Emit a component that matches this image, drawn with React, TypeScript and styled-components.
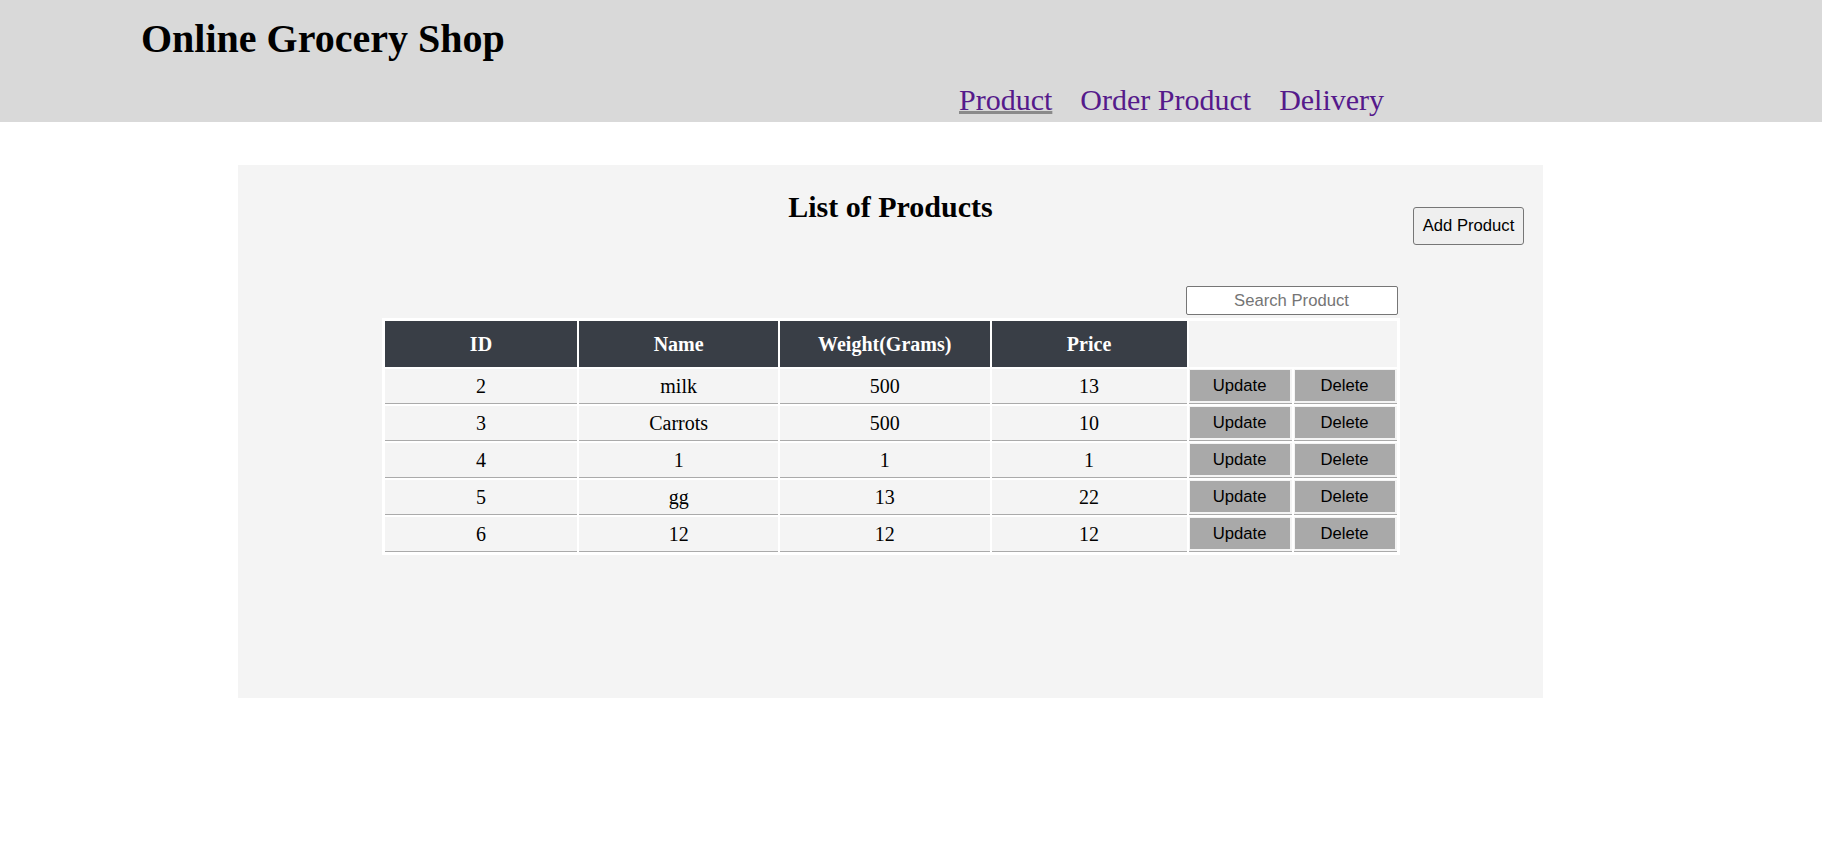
import React from "react";
import styled, { createGlobalStyle } from "styled-components";

const GlobalStyle = createGlobalStyle`
  html, body {
    margin: 0;
    padding: 0;
    background: #ffffff;
    font-family: "Liberation Serif", "Times New Roman", serif;
    color: #000;
  }
  * { box-sizing: border-box; }
`;

const Header = styled.header`
  height: 122px;
  background: #d9d9d9;
  padding: 16px 0 0 141px;
  display: flex;
  flex-direction: column;
`;

const Title = styled.h1`
  margin: 0;
  font-size: 40px;
  line-height: 46px;
  font-weight: bold;
`;

const Nav = styled.nav`
  display: flex;
  gap: 28px;
  margin: 21px 0 0 818px;
  font-size: 30px;
  line-height: 34px;
`;

const NavLink = styled.a<{ $active?: boolean }>`
  color: #551a8b;
  text-decoration: ${(p) => (p.$active ? "underline" : "none")};
  text-decoration-color: #8a8a8a;
  text-decoration-thickness: 3px;
  text-underline-offset: 1px;
`;

const Panel = styled.main`
  width: 1305px;
  height: 533px;
  margin: 43px 0 0 238px;
  background: #f4f4f4;
  display: flex;
  flex-direction: column;
`;

const PanelTop = styled.div`
  display: grid;
  grid-template-columns: 1fr auto 1fr;
  align-items: start;
  padding-top: 25px;
`;

const Heading = styled.h2`
  grid-column: 2;
  margin: 0;
  font-size: 30px;
  line-height: 34px;
  font-weight: bold;
  text-align: center;
`;

const AddButton = styled.button`
  grid-column: 3;
  justify-self: end;
  margin: 17px 19px 0 0;
  width: 111px;
  height: 38px;
  padding: 0;
  background: #efefef;
  border: 1px solid #767676;
  border-radius: 3px;
  font-family: "Liberation Sans", Arial, sans-serif;
  font-size: 16.67px;
  color: #000;
`;

const TableArea = styled.section`
  width: 1018px;
  margin: 41px auto 0;
  display: flex;
  flex-direction: column;
`;

const SearchRow = styled.div`
  display: flex;
  justify-content: flex-end;
  padding-right: 2px;
  margin-bottom: 3px;
`;

const SearchInput = styled.input`
  width: 212px;
  height: 29px;
  border: 1px solid #767676;
  border-radius: 2px;
  background: #fff;
  text-align: center;
  font-family: "Liberation Sans", Arial, sans-serif;
  font-size: 16.67px;
  padding: 0 4px;
  &::placeholder {
    color: #757575;
  }
`;

const Table = styled.table`
  width: 1018px;
  table-layout: fixed;
  border-collapse: separate;
  border-spacing: 2.5px;
  border: 1px solid #fff;
  background: #fff;
`;

const HeadCell = styled.th`
  height: 46px;
  padding: 0;
  background: #393e46;
  color: #fff;
  font-size: 20px;
  font-weight: bold;
  text-align: center;
  vertical-align: middle;
`;

const CornerCell = styled.th`
  padding: 0;
  background: #f4f4f4;
`;

const Cell = styled.td`
  height: 34px;
  padding: 0;
  background: #f4f4f4;
  border-bottom: 1px solid #aaaaaa;
  font-size: 20px;
  text-align: center;
  vertical-align: middle;
`;

const ActionCell = styled.td`
  height: 34px;
  padding: 1px 1px 2px;
  background: #f4f4f4;
  border-bottom: 1px solid #aaaaaa;
  vertical-align: top;
`;

const ActionButton = styled.button`
  display: block;
  width: 100px;
  height: 31px;
  padding: 0;
  border: none;
  background: #a9a9a9;
  color: #000;
  font-family: "Liberation Sans", Arial, sans-serif;
  font-size: 16.67px;
`;

const columns = [192.3, 197.7, 209, 194.3, 102.6, 102.6];

const products = [
  { id: 2, name: "milk", weight: 500, price: 13 },
  { id: 3, name: "Carrots", weight: 500, price: 10 },
  { id: 4, name: "1", weight: 1, price: 1 },
  { id: 5, name: "gg", weight: 13, price: 22 },
  { id: 6, name: "12", weight: 12, price: 12 },
];

export default function App() {
  return (
    <>
      <GlobalStyle />
      <Header>
        <Title>Online Grocery Shop</Title>
        <Nav>
          <NavLink href="#" $active>
            Product
          </NavLink>
          <NavLink href="#">Order Product</NavLink>
          <NavLink href="#">Delivery</NavLink>
        </Nav>
      </Header>
      <Panel>
        <PanelTop>
          <Heading>List of Products</Heading>
          <AddButton>Add Product</AddButton>
        </PanelTop>
        <TableArea>
          <SearchRow>
            <SearchInput placeholder="Search Product" />
          </SearchRow>
          <Table>
            <colgroup>
              {columns.map((w, i) => (
                <col key={i} style={{ width: `${w}px` }} />
              ))}
            </colgroup>
            <thead>
              <tr>
                <HeadCell>ID</HeadCell>
                <HeadCell>Name</HeadCell>
                <HeadCell>Weight(Grams)</HeadCell>
                <HeadCell>Price</HeadCell>
                <CornerCell colSpan={2} />
              </tr>
            </thead>
            <tbody>
              {products.map((p) => (
                <tr key={p.id}>
                  <Cell>{p.id}</Cell>
                  <Cell>{p.name}</Cell>
                  <Cell>{p.weight}</Cell>
                  <Cell>{p.price}</Cell>
                  <ActionCell>
                    <ActionButton>Update</ActionButton>
                  </ActionCell>
                  <ActionCell>
                    <ActionButton>Delete</ActionButton>
                  </ActionCell>
                </tr>
              ))}
            </tbody>
          </Table>
        </TableArea>
      </Panel>
    </>
  );
}
